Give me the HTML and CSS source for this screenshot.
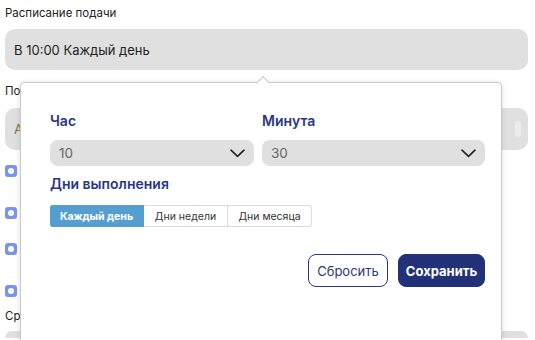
FILE: index.html
```html
<!DOCTYPE html>
<html>
<head>
    <title>Расписание подачи</title>
    <link rel="stylesheet" href="styles.css">
</head>
<body>
    <div class="form">
        <div class="field">
            <label class="field-label">Расписание подачи</label>
            <div class="input">В 10:00 Каждый день</div>
        </div>

        <div class="field field-second">
            <label class="field-label">Получатели</label>
            <div class="input input-muted">
                <span>А</span>
                <span class="grip"></span>
            </div>
        </div>

        <div class="checks">
            <div class="check check-1"><span class="box"></span></div>
            <div class="check check-2"><span class="box"></span></div>
            <div class="check check-3"><span class="box"></span></div>
            <div class="check check-4"><span class="box"></span></div>
        </div>

        <div class="field field-last">
            <label class="field-label">Срок хранения</label>
            <div class="input"></div>
        </div>
    </div>

    <!-- popover over the schedule field -->
    <div class="popover">
        <div class="time-grid">
            <div class="time-col">
                <div class="pop-title">Час</div>
                <div class="select">
                    <span>10</span>
                    <svg width="15" height="9" viewBox="0 0 15 9"><path d="M1 1.2 L7.5 7.4 L14 1.2" fill="none" stroke="#222" stroke-width="1.6" stroke-linecap="round" stroke-linejoin="round"/></svg>
                </div>
            </div>
            <div class="time-col">
                <div class="pop-title">Минута</div>
                <div class="select">
                    <span>30</span>
                    <svg width="15" height="9" viewBox="0 0 15 9"><path d="M1 1.2 L7.5 7.4 L14 1.2" fill="none" stroke="#222" stroke-width="1.6" stroke-linecap="round" stroke-linejoin="round"/></svg>
                </div>
            </div>
        </div>

        <div class="pop-title days-title">Дни выполнения</div>
        <div class="segments">
            <button class="segment active">Каждый день</button>
            <button class="segment">Дни недели</button>
            <button class="segment">Дни месяца</button>
        </div>

        <div class="actions">
            <button class="btn btn-outline">Сбросить</button>
            <button class="btn btn-primary">Сохранить</button>
        </div>
    </div>
</body>
</html>
```

FILE: styles.css
```css
html {
    overflow: hidden;
}
body {
    margin: 0;
    padding: 0 7px 0 5px;
    height: 340px;
    overflow: hidden;
    font-family: Inter, "Noto Sans", Arial, sans-serif;
    color: #222;
    background-color: #fff;
}
.form {
    padding-top: 6px;
}
.field-label {
    display: block;
    font-size: 11.5px;
    line-height: 14px;
    margin-bottom: 9px;
}
.input {
    height: 41px;
    box-sizing: border-box;
    padding: 0 9px;
    display: flex;
    align-items: center;
    justify-content: space-between;
    background-color: #e0e0e0;
    border-radius: 10px;
    font-size: 13px;
}
.input-muted {
    color: #8a7350;
}
.grip {
    width: 6px;
    height: 16px;
    margin-right: -2px;
    border-radius: 3px;
    background-color: #ececec;
}
.field-second {
    margin-top: 14px;
}
.field-second .field-label {
    margin-bottom: 10px;
}
.field-second .input {
    height: 42px;
}
.checks {
    padding-top: 15px;
}
.check {
    display: flex;
    align-items: center;
    height: 12px;
}
.check-2 { margin-top: 30px; }
.check-3 { margin-top: 24px; }
.check-4 { margin-top: 30px; }
.box {
    width: 12px;
    height: 12px;
    box-sizing: border-box;
    border-radius: 3px;
    background-color: #7a93ec;
    display: flex;
    align-items: center;
    justify-content: center;
}
.box::after {
    content: "";
    width: 6px;
    height: 6px;
    border-radius: 50%;
    background-color: #fff;
}
.field-last {
    margin-top: 12px;
}
.field-last .field-label {
    margin-bottom: 8px;
}
.field-last .input {
    height: 7px;
    border-radius: 10px 10px 0 0;
}

.popover {
    position: absolute;
    left: 20px;
    top: 82px;
    width: 482px;
    height: 262px;
    box-sizing: border-box;
    padding: 29px 16px 0 29px;
    background-color: #fff;
    border: 1px solid #c9c9c9;
    border-radius: 4px;
    box-shadow: 0 1px 6px rgba(0,0,0,0.12);
}
.popover::before {
    content: "";
    position: absolute;
    left: 237px;
    top: -5px;
    width: 9px;
    height: 9px;
    background-color: #fff;
    border-left: 1px solid #c9c9c9;
    border-top: 1px solid #c9c9c9;
    transform: rotate(45deg);
}
.time-grid {
    display: grid;
    grid-template-columns: 204px 223px;
    gap: 8px;
}
.pop-title {
    font-size: 14px;
    font-weight: 600;
    line-height: 18px;
    color: #2a3782;
}
.select {
    margin-top: 10px;
    height: 26px;
    box-sizing: border-box;
    padding: 0 9px 0 9px;
    display: flex;
    align-items: center;
    justify-content: space-between;
    background-color: #e0e0e0;
    border-radius: 8px;
    font-size: 13.5px;
    color: #666;
}
.days-title {
    margin-top: 9px;
}
.segments {
    display: flex;
    margin-top: 12px;
    width: max-content;
}
.segment {
    height: 22px;
    box-sizing: border-box;
    padding: 0;
    border: 1px solid #dcdcdc;
    border-left: none;
    background-color: #fff;
    font-family: Inter, "Noto Sans", Arial, sans-serif;
    font-size: 10.5px;
    color: #333;
    width: 84px;
}
.segment:first-child {
    width: 94px;
    border-radius: 3px 0 0 3px;
}
.segment:last-child {
    border-radius: 0 3px 3px 0;
}
.segment.active {
    background-color: #549fd0;
    border-color: #549fd0;
    color: #fff;
    font-weight: 700;
}
.actions {
    display: flex;
    justify-content: flex-end;
    gap: 10px;
    margin-top: 27px;
}
.btn {
    height: 33px;
    box-sizing: border-box;
    border-radius: 8px;
    font-family: Inter, "Noto Sans", Arial, sans-serif;
    font-size: 13px;
    cursor: pointer;
}
.btn-outline {
    width: 80px;
    background-color: #fff;
    border: 1px solid #2a3782;
    color: #2a3782;
}
.btn-primary {
    width: 87px;
    background-color: #233178;
    border: 1px solid #233178;
    color: #fff;
    font-weight: 700;
}
```
